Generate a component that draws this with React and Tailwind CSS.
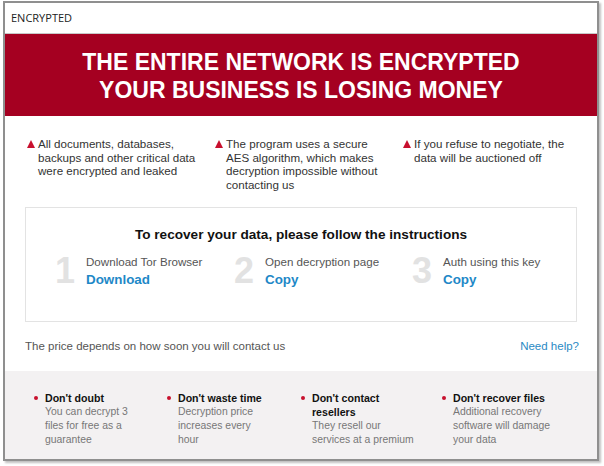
import React from 'react';

const points = [
    'All documents, databases, backups and other critical data were encrypted and leaked',
    'The program uses a secure AES algorithm, which makes decryption impossible without contacting us',
    'If you refuse to negotiate, the data will be auctioned off',
];

const steps = [
    { n: '1', label: 'Download Tor Browser', action: 'Download', w: 'w-[179px] shrink-0' },
    { n: '2', label: 'Open decryption page', action: 'Copy', w: 'w-[178px] shrink-0' },
    { n: '3', label: 'Auth using this key', action: 'Copy', w: 'flex-1' },
];

const tips = [
    { title: "Don't doubt", text: 'You can decrypt 3 files for free as a guarantee', w: 'w-[133px]', tw: 'w-[96px]' },
    { title: "Don't waste time", text: 'Decryption price increases every hour', w: 'w-[134px]', tw: 'w-[94px]' },
    { title: "Don't contact resellers", text: 'They resell our services at a premium', w: 'w-[141px]', tw: 'w-[106px]' },
    { title: "Don't recover files", text: 'Additional recovery software will damage your data', w: 'w-[130px]', tw: 'w-[104px]' },
];

const Triangle = () => (
    <svg width="8" height="8" viewBox="0 0 8 8" className="shrink-0 mt-[3px] mr-[3px]">
        <polygon points="4,0 8,8 0,8" fill="#c8102e" />
    </svg>
);

export default function App() {
    return (
        <div className="w-[604px] h-[466px] bg-white pl-[3px] pt-[1px]" style={{ fontFamily: '"Liberation Sans", Arial, sans-serif' }}>
            <div className="w-[596px] h-[460px] border-2 border-[#8f8f8f] bg-white flex flex-col shadow-[2px_2px_2px_rgba(0,0,0,0.25)]">
                {/* title bar */}
                <div className="h-[31px] flex items-center pl-[6px] border-b border-[#c8c8c8] text-[11px] text-[#222]" style={{ fontFamily: '"Open Sans", "Noto Sans", sans-serif' }}>
                    ENCRYPTED
                </div>

                {/* banner */}
                <div className="h-[82px] bg-[#a50021] flex flex-col items-center justify-center text-white font-bold text-[23px] leading-[28px] pt-[1px]">
                    <div>THE ENTIRE NETWORK IS ENCRYPTED</div>
                    <div>YOUR BUSINESS IS LOSING MONEY</div>
                </div>

                {/* warnings */}
                <div className="flex pl-[22px] pt-[21px] h-[91px]">
                    {points.map((p, i) => (
                        <div key={i} className="w-[188px] shrink-0 flex items-start text-[11.6px] leading-[13.7px] text-[#333]">
                            <Triangle />
                            <span className="w-[158px]">{p}</span>
                        </div>
                    ))}
                </div>

                {/* instructions */}
                <div className="mx-[20px] h-[115px] border border-[#e3e3e3] flex flex-col">
                    <div className="text-center font-bold text-[13.6px] text-[#111] pt-[19px] leading-[16px]">
                        To recover your data, please follow the instructions
                    </div>
                    <div className="flex pl-[29px] pt-[10px]">
                        {steps.map((s) => (
                            <div key={s.n} className={`${s.w} flex items-start`}>
                                <div className="text-[36px] leading-[36px] text-[#e2e2e2] font-bold w-[31px] shrink-0">{s.n}</div>
                                <div className="flex flex-col pt-[2px]">
                                    <span className="text-[11.6px] leading-[14px] text-[#555]">{s.label}</span>
                                    <span className="text-[13.4px] leading-[18px] font-bold text-[#1e88c7] mt-[2px]">{s.action}</span>
                                </div>
                            </div>
                        ))}
                    </div>
                </div>

                <div className="flex justify-between items-center ml-[20px] mr-[18px] mt-[17px] text-[11.5px] leading-[14px]">
                    <span className="text-[#555]">The price depends on how soon you will contact us</span>
                    <span className="text-[#2a8ac4]">Need help?</span>
                </div>

                {/* tips */}
                <div className="flex-1 mt-[18px] bg-[#f3f1f2] flex pl-[29px] pt-[20px]">
                    {tips.map((t) => (
                        <div key={t.title} className={`${t.w} shrink-0 flex items-start`}>
                            <span className="w-[4px] h-[4px] rounded-full bg-[#c8102e] shrink-0 mt-[5px] mr-[7px]" />
                            <div className={`${t.tw} flex flex-col text-[10.4px] leading-[14px]`}>
                                <span className="font-bold text-[#111] text-[10.6px]">{t.title}</span>
                                <span className="text-[#777]">{t.text}</span>
                            </div>
                        </div>
                    ))}
                </div>
            </div>
        </div>
    );
}
